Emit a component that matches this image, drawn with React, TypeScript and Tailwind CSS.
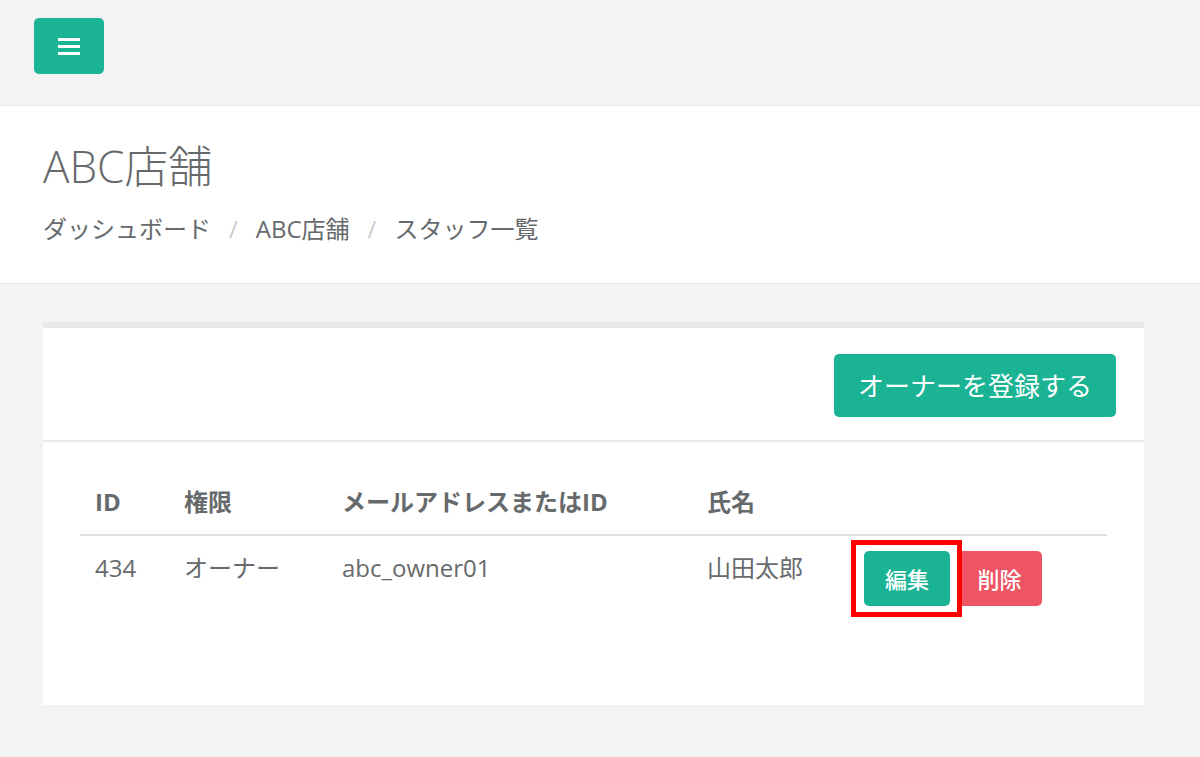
import React from "react";

export default function App() {
  const font = "font-['Open_Sans','Noto_Sans_CJK_JP',sans-serif]";
  return (
    <div className={`min-h-[757px] bg-[#f3f3f4] ${font} text-[#676a6c]`}>
      {/* Top bar */}
      <div className="h-[106px] border-b border-[#e7eaec] pl-[34px] pt-[18px]">
        <button className="w-[70px] h-[56px] rounded-[5px] bg-[#1ab394] flex flex-col items-center justify-center gap-[4px]">
          <span className="block w-[22px] h-[3px] bg-white" />
          <span className="block w-[22px] h-[3px] bg-white" />
          <span className="block w-[22px] h-[3px] bg-white" />
        </button>
      </div>

      {/* Page heading */}
      <div className="h-[178px] bg-white border-b border-[#e7eaec] px-[43px] pt-[36px]">
        <h2 className="text-[44px] leading-[48px] font-light">ABC店舗</h2>
        <ol className="mt-[22px] flex text-[24px] leading-[34px]">
          <li>ダッシュボード</li>
          <li className="px-[18px] text-[#cccccc]">/</li>
          <li>ABC店舗</li>
          <li className="px-[18px] text-[#cccccc]">/</li>
          <li>スタッフ一覧</li>
        </ol>
      </div>

      {/* Content */}
      <div className="pl-[43px] pr-[56px] pt-[38px]">
        <div className="bg-white border-t-[6px] border-[#e8e9eb]">
          <div className="flex justify-end pt-[26px] pb-[23px] pr-[28px] border-b-2 border-[#e8e9eb]">
            <button className="h-[63px] px-[24px] rounded-[5px] bg-[#1ab394] text-white text-[26px] leading-[34px]">
              オーナーを登録する
            </button>
          </div>
          <div className="px-[37px] pt-[28px] pb-[84px]">
            <table className="w-full table-fixed border-collapse text-[24px] leading-[34px]">
              <colgroup>
                <col className="w-[89px]" />
                <col className="w-[158px]" />
                <col className="w-[365px]" />
                <col className="w-[157px]" />
                <col />
              </colgroup>
              <thead>
                <tr className="border-b-2 border-[#e0e0e0]">
                  <th className="p-[15px] text-left font-bold">ID</th>
                  <th className="p-[15px] text-left font-bold">権限</th>
                  <th className="p-[15px] text-left font-bold">メールアドレスまたはID</th>
                  <th className="p-[15px] text-left font-bold">氏名</th>
                  <th className="p-[15px]"></th>
                </tr>
              </thead>
              <tbody>
                <tr>
                  <td className="p-[15px] align-top">434</td>
                  <td className="p-[15px] align-top">オーナー</td>
                  <td className="p-[15px] align-top">abc_owner01</td>
                  <td className="p-[15px] align-top">山田太郎</td>
                  <td className="p-[15px] align-top">
                    <div className="flex gap-[7px]">
                      <span className="relative">
                        <button className="h-[55px] w-[86px] rounded-[5px] bg-[#1ab394] text-white text-[22px] leading-[30px] font-medium">
                          編集
                        </button>
                        <span className="absolute left-[-13px] top-[-11px] w-[111px] h-[77px] border-[5px] border-[#ff0000] pointer-events-none" />
                      </span>
                      <button className="h-[55px] w-[85px] rounded-[5px] bg-[#ed5565] text-white text-[22px] leading-[30px] font-medium">
                        削除
                      </button>
                    </div>
                  </td>
                </tr>
              </tbody>
            </table>
          </div>
        </div>
      </div>
    </div>
  );
}
